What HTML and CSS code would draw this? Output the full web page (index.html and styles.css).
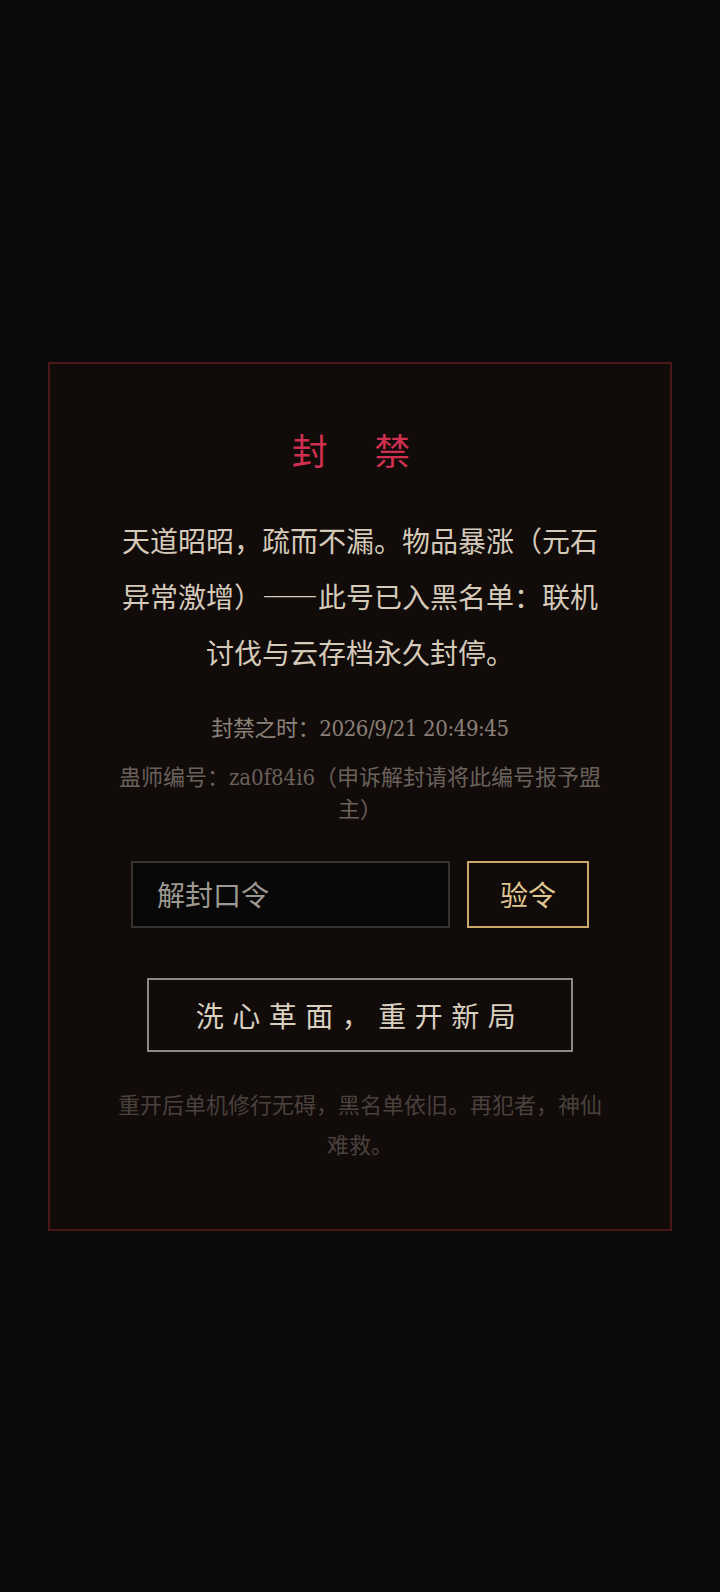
FILE: index.html
```html
<!DOCTYPE html>
<html lang="zh-CN">
  <head>
    <meta charset="UTF-8" />
    <meta name="viewport" content="width=device-width, initial-scale=1.0" />
    <title>封禁</title>
    <link rel="stylesheet" href="styles.css">
  </head>
  <body>
    <div class="ban-card">
      <h1 class="ban-title">封 禁</h1>
      <p class="ban-text">天道昭昭，疏而不漏。物品暴涨（元石异常激增）——此号已入黑名单：联机讨伐与云存档永久封停。</p>

      <p class="ban-time">封禁之时：2026/9/21 20:49:45</p>
      <p class="ban-id">蛊师编号：za0f84i6（申诉解封请将此编号报予盟主）</p>

      <div class="unlock-row">
        <input type="text" class="unlock-input" placeholder="解封口令" />
        <button class="unlock-btn">验令</button>
      </div>

      <button class="restart-btn">洗心革面，重开新局</button>

      <p class="ban-note">重开后单机修行无碍，黑名单依旧。再犯者，神仙难救。</p>
    </div>
  </body>
</html>
```

FILE: styles.css
```css
body {
  font-family: "Noto Sans CJK SC", sans-serif;
  background: #0a0a0a;
  margin: 0;
  padding: 0 48px;
  min-height: 100vh;
  display: flex;
  align-items: center;
  justify-content: center;
  box-sizing: border-box;
}

.ban-card {
  width: 100%;
  background: #110b0a;
  border: 2px solid #4a1618;
  padding: 62px 62px 66px;
  text-align: center;
  display: flex;
  flex-direction: column;
  align-items: center;
}

.ban-title {
  margin: 0 0 32px;
  font-family: "DejaVu Serif", "Noto Sans CJK SC", serif;
  font-stretch: condensed;
  font-size: 36px;
  font-weight: normal;
  line-height: 54px;
  letter-spacing: 0.5em;
  color: #cf3050;
}

.ban-text {
  margin: 0 0 33px;
  font-size: 28px;
  line-height: 56px;
  color: #d5cab9;
}

.ban-time,
.ban-id {
  font-family: "DejaVu Serif", "Noto Sans CJK SC", serif;
  font-stretch: condensed;
  font-size: 22px;
  line-height: 32px;
}

.ban-time {
  margin: 0 0 17px;
  letter-spacing: -0.4px;
  color: #8a8077;
}

.ban-id {
  margin: 0 0 35px;
  color: #6a615a;
}

.unlock-row {
  display: flex;
  justify-content: center;
  gap: 17px;
  margin-bottom: 50px;
}

.unlock-input {
  width: 319px;
  box-sizing: border-box;
  background: #080808;
  border: 2px solid #38332f;
  padding: 12px 24px;
  font-family: inherit;
  font-size: 28px;
  line-height: 39px;
  color: #d5cab9;
  outline: none;
}

.unlock-input::placeholder {
  color: #9e9893;
}

.unlock-btn {
  background: transparent;
  border: 2px solid #c9a96e;
  padding: 12px 31px;
  font-family: inherit;
  font-size: 28px;
  line-height: 39px;
  color: #e0c792;
  cursor: pointer;
}

.restart-btn {
  margin-bottom: 31px;
  background: transparent;
  border: 2px solid #8f8983;
  padding: 15px 47px;
  font-family: inherit;
  font-size: 28px;
  line-height: 40px;
  letter-spacing: 8.5px;
  color: #dad0c0;
  cursor: pointer;
}

.ban-note {
  margin: 0;
  font-size: 22px;
  line-height: 40px;
  color: #4a413c;
}
```
